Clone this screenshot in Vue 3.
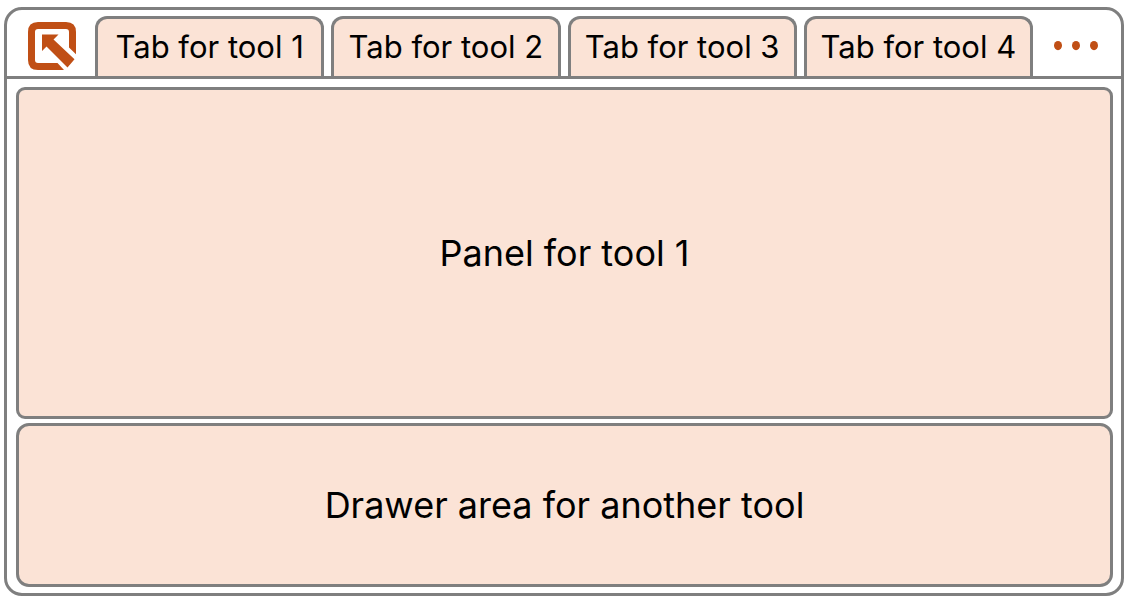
<script setup>
import { ref } from 'vue'

const tools = [1, 2, 3, 4]
const active = ref(1)
</script>

<template>
  <div class="page">
    <main class="frame">
      <header class="bar">
        <a class="logo" href="#" aria-label="Home">
          <svg viewBox="0 0 48 48" aria-hidden="true">
            <path
              d="M48 32.3V10Q48 0 38 0H10Q0 0 0 10V38Q0 48 10 48H36L29.5 41H10Q7 41 7 38V10Q7 7 10 7H38Q41 7 41 10V25.5Z"
            />
            <path d="M14 12.5H30.5L25.5 17.5L46.5 37.3L39.5 45.5L18.5 24.5L14 29Z" />
          </svg>
        </a>
        <div class="tabs" role="tablist">
          <button
            v-for="n in tools"
            :id="`tab-${n}`"
            :key="n"
            class="tab"
            type="button"
            role="tab"
            :aria-selected="active === n"
            aria-controls="panel"
            @click="active = n"
          >
            Tab for tool {{ n }}
          </button>
        </div>
        <button class="more" type="button" aria-label="More tools">
          <svg viewBox="0 0 44 10" aria-hidden="true">
            <ellipse cx="4" cy="4.6" rx="4" ry="4.6" />
            <ellipse cx="22" cy="4.6" rx="4" ry="4.6" />
            <ellipse cx="40" cy="4.6" rx="4" ry="4.6" />
          </svg>
        </button>
      </header>
      <div class="content">
        <section id="panel" class="panel" role="tabpanel" :aria-labelledby="`tab-${active}`">
          Panel for tool {{ active }}
        </section>
        <aside class="drawer">Drawer area for another tool</aside>
      </div>
    </main>
  </div>
</template>

<style>
body {
  background: #fff;
}
</style>

<style scoped>
.page {
  display: flex;
  box-sizing: border-box;
  min-height: 100vh;
  padding: 7px 2px 2px 4px;
  color: #000;
  font-family: Inter, "Liberation Sans", sans-serif;
}

.frame {
  display: flex;
  flex: 1;
  flex-direction: column;
  border: 3px solid #7f7f7f;
  border-radius: 18px;
}

.bar {
  display: flex;
  padding: 6px 23px 0 21px;
  border-bottom: 3px solid #7f7f7f;
}

.logo {
  width: 48px;
  height: 48px;
  margin: 6px 19px 6px 0;
}

.logo svg,
.more svg {
  display: block;
  width: 100%;
  fill: #c04f15;
}

.tabs {
  display: flex;
  flex: 1;
  gap: 7px;
}

.tab {
  flex: 1;
  padding: 0 0 2px;
  border: 3px solid #7f7f7f;
  border-bottom: 0;
  border-radius: 12px 12px 0 0;
  background: #fbe3d6;
  color: inherit;
  font: inherit;
  font-size: 31px;
  line-height: 40px;
  white-space: nowrap;
  cursor: pointer;
}

.more {
  width: 44px;
  margin-left: 21px;
  padding: 0;
  border: 0;
  background: none;
  cursor: pointer;
}

.content {
  display: flex;
  flex: 1;
  flex-direction: column;
  gap: 4px;
  padding: 8px 8px 6px 9px;
}

.panel,
.drawer {
  display: flex;
  align-items: center;
  justify-content: center;
  box-sizing: border-box;
  border: 3px solid #7f7f7f;
  background: #fbe3d6;
  font-size: 36px;
  line-height: 48px;
}

.panel {
  flex: 326 0 0;
  border-radius: 9px;
}

.drawer {
  flex: 158 0 0;
  border-radius: 13px;
}
</style>
